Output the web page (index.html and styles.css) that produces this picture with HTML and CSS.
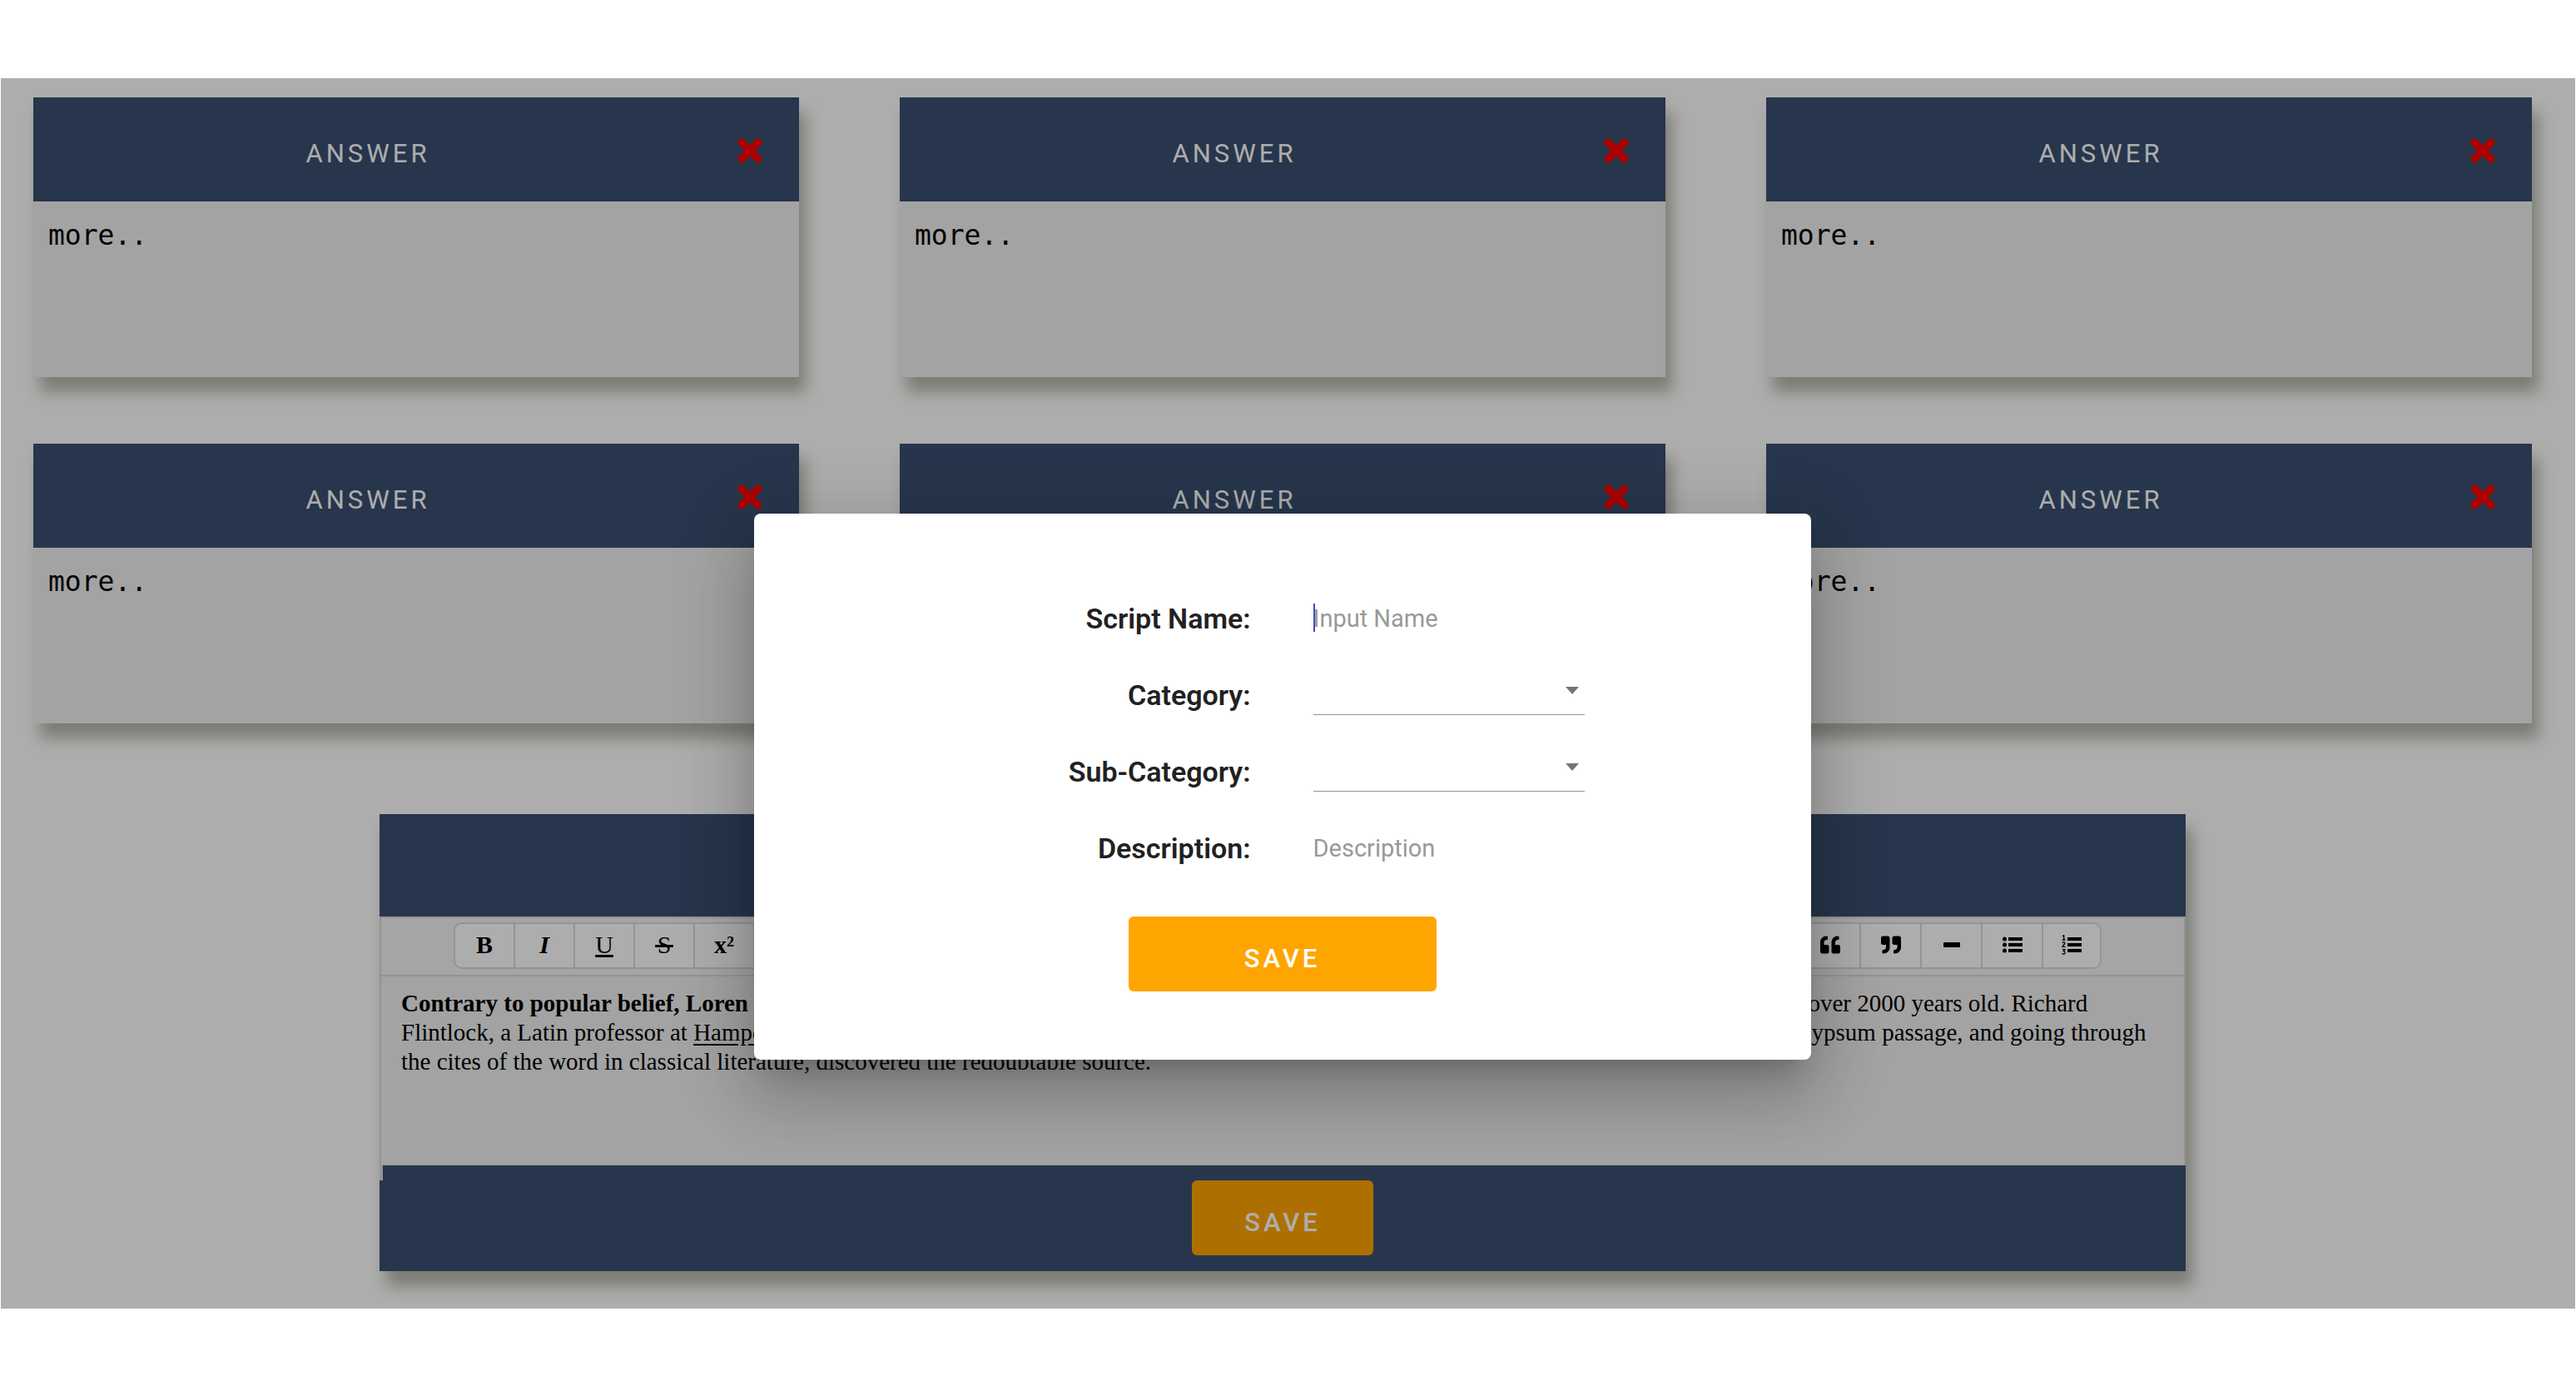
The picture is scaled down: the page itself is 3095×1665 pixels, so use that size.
FILE: index.html
```html
<!DOCTYPE html>
<html lang="en">
<head>
<meta charset="utf-8">
<title>Scripts</title>
<link rel="stylesheet" href="styles.css">
</head>
<body>
<svg class="sprite" aria-hidden="true">
  <symbol id="times" viewBox="0 0 30 30"><path d="M5 5 25 25M25 5 5 25" stroke="currentColor" stroke-width="9" stroke-linecap="round"/></symbol>
  <symbol id="quote-left" viewBox="0 0 512 512"><path fill="currentColor" d="M464 256h-80v-64c0-35.300 28.700-64 64-64h8c13.300 0 24-10.700 24-24V56c0-13.300-10.700-24-24-24h-8c-88.400 0-160 71.600-160 160v240c0 26.500 21.500 48 48 48h128c26.500 0 48-21.500 48-48V304c0-26.500-21.500-48-48-48zm-288 0H96v-64c0-35.300 28.700-64 64-64h8c13.300 0 24-10.700 24-24V56c0-13.300-10.700-24-24-24h-8C71.600 32 0 103.600 0 192v240c0 26.500 21.500 48 48 48h128c26.500 0 48-21.500 48-48V304c0-26.500-21.500-48-48-48z"/></symbol>
  <symbol id="quote-right" viewBox="0 0 512 512"><path fill="currentColor" d="M464 32H336c-26.500 0-48 21.500-48 48v128c0 26.500 21.500 48 48 48h80v64c0 35.300-28.700 64-64 64h-8c-13.300 0-24 10.700-24 24v48c0 13.300 10.700 24 24 24h8c88.400 0 160-71.600 160-160V80c0-26.500-21.500-48-48-48zm-288 0H48C21.500 32 0 53.500 0 80v128c0 26.500 21.500 48 48 48h80v64c0 35.300-28.700 64-64 64h-8c-13.300 0-24 10.700-24 24v48c0 13.300 10.700 24 24 24h8c88.400 0 160-71.600 160-160V80c0-26.500-21.500-48-48-48z"/></symbol>
  <symbol id="minus" viewBox="0 0 24 24"><rect x="2" y="9" width="20" height="6" rx="1" fill="currentColor"/></symbol>
  <symbol id="list-ul" viewBox="0 0 24 24"><g fill="currentColor"><circle cx="2.500" cy="5" r="2.500"/><circle cx="2.500" cy="12" r="2.500"/><circle cx="2.500" cy="19" r="2.500"/><path d="M7 3h17v4H7zM7 10h17v4H7zM7 17h17v4H7z"/></g></symbol>
  <symbol id="list-ol" viewBox="0 0 24 24"><path fill="currentColor" d="M7 3h17v4H7zM7 10h17v4H7zM7 17h17v4H7z"/><path fill="none" stroke="currentColor" stroke-width="1.300" d="M1 1.500 2.700.7V6M.8 6H4.500M.8 9.700C2 8.300 4 8.800 3.800 10.300 3.600 11.500 1 12.800 1 14.300H4.500M.8 17.600H4L2.400 19.700C4.500 19.700 4.600 23 2.400 23 1.600 23 1 22.800.6 22.300"/></symbol>
</svg>

<div class="stage">
  <main class="page">
    <section class="cards">
      <article class="card"><header class="card-head"><h2>ANSWER</h2><button class="close" aria-label="Remove"><svg><use href="#times"/></svg></button></header><pre class="card-body">more..</pre></article>
      <article class="card"><header class="card-head"><h2>ANSWER</h2><button class="close" aria-label="Remove"><svg><use href="#times"/></svg></button></header><pre class="card-body">more..</pre></article>
      <article class="card"><header class="card-head"><h2>ANSWER</h2><button class="close" aria-label="Remove"><svg><use href="#times"/></svg></button></header><pre class="card-body">more..</pre></article>
      <article class="card"><header class="card-head"><h2>ANSWER</h2><button class="close" aria-label="Remove"><svg><use href="#times"/></svg></button></header><pre class="card-body">more..</pre></article>
      <article class="card"><header class="card-head"><h2>ANSWER</h2><button class="close" aria-label="Remove"><svg><use href="#times"/></svg></button></header><pre class="card-body">more..</pre></article>
      <article class="card"><header class="card-head"><h2>ANSWER</h2><button class="close" aria-label="Remove"><svg><use href="#times"/></svg></button></header><pre class="card-body">more..</pre></article>
    </section>

    <section class="editor">
      <header class="editor-head"></header>
      <div class="toolbar">
        <div class="tools">
          <button class="tool" aria-label="Bold">B</button>
          <button class="tool" aria-label="Italic"><i>I</i></button>
          <button class="tool thin" aria-label="Underline"><u>U</u></button>
          <button class="tool thin" aria-label="Strikethrough"><s>&hairsp;S&hairsp;</s></button>
          <button class="tool" aria-label="Superscript">x²</button>
          <span class="tools-fill"></span>
          <button class="tool" aria-label="Open quote"><svg><use href="#quote-left"/></svg></button>
          <button class="tool" aria-label="Close quote"><svg><use href="#quote-right"/></svg></button>
          <button class="tool" aria-label="Rule"><svg><use href="#minus"/></svg></button>
          <button class="tool" aria-label="Bulleted list"><svg><use href="#list-ul"/></svg></button>
          <button class="tool" aria-label="Numbered list"><svg><use href="#list-ol"/></svg></button>
        </div>
      </div>
      <div class="editor-text">
        <p><b>Contrary to popular belief, Loren Ipsum is not simply random text.</b> It has roots in a piece of classical Latin literature, from 45 BC, making it over 2000 years old. Richard<br>
        Flintlock, a Latin professor at <u>Hampden-Sydney</u> College in Virginia, looked up one of the more obscure Latin words consectetur, from a Lorem Gypsum passage, and going through<br>
        the cites of the word in classical literature, discovered the redoubtable source.</p>
      </div>
      <footer class="editor-foot"><button class="save">SAVE</button></footer>
    </section>
  </main>

  <div class="backdrop">
    <form class="dialog" role="dialog" aria-label="Save script">
      <div class="row"><label for="name">Script Name:</label><span class="field focused"><input id="name" placeholder="Input Name"></span></div>
      <div class="row"><label for="category">Category:</label><span class="field select"><select id="category"><option></option></select></span></div>
      <div class="row"><label for="sub">Sub-Category:</label><span class="field select"><select id="sub"><option></option></select></span></div>
      <div class="row"><label for="desc">Description:</label><span class="field"><input id="desc" placeholder="Description"></span></div>
      <button type="button" class="save save-wide">SAVE</button>
    </form>
  </div>
</div>
</body>
</html>
```
FILE: styles.css
```css
* { box-sizing: border-box; }
body { margin: 0; padding: 94px 1px; background: #fff; font-family: Roboto, sans-serif; }
button, input, select { font: inherit; border: 0; background: none; padding: 0; margin: 0; }
.sprite { display: none; }
.stage { position: relative; }
.page { padding: 23px 52px 45px 39px; background: #fff; }

.cards { display: grid; grid-template-columns: repeat(3, 1fr); gap: 80px 121px; }
.card, .editor { box-shadow: 8px 18px 18px #b6b7aa; }
.card-head { display: flex; align-items: center; height: 125px; padding: 2px 44px 0 0; background: #3a5070; color: #fff; }
.card-head h2 { flex: 1; margin: 0; padding: 8px 42px 0 0; text-align: center; font-size: 31px; font-weight: 400; letter-spacing: 4px; line-height: 36px; }
.close { width: 30px; height: 30px; color: red; }
.close svg { display: block; width: 30px; height: 30px; }
.card-body { margin: 0; height: 211px; padding: 22px 18px; background: #f0f0f0; font: 33px/38px "DejaVu Sans Mono", monospace; color: #000; }

.editor { margin: 109px 416px 0; }
.editor-head { height: 123px; background: #3a5070; }
.toolbar { border: 2px solid #dbdbdb; background: #f3f3f3; height: 72px; padding: 5px 99px 0 87px; }
.tools { display: flex; height: 56px; border: 2px solid #dbdbdb; border-radius: 10px; background: #fff; }
.tool { width: 72px; padding-bottom: 2px; border-right: 2px solid #dbdbdb; display: flex; align-items: center; justify-content: center; font: bold 30px "Liberation Serif", serif; color: #000; }
.tool.thin { font-weight: 400; }
.tools-fill ~ .tool { width: 73px; }
.tools .tool:last-child { width: 68px; border-right: 0; }
.tool svg { width: 24px; height: 24px; }
.tools-fill { flex: 1; }
.editor-text { height: 227px; padding: 15px 24px; border: 2px solid #dbdbdb; border-top: 0; border-bottom-width: 1px; background: #f0f0f0; font: 29px/35px "Liberation Serif", serif; color: #000; }
.editor-text p { margin: 0; white-space: nowrap; }
.editor-text u { text-underline-offset: 4px; }
.editor-foot { position: relative; display: flex; justify-content: center; padding: 18px 0 19px; background: #3a5070; }
.editor-foot::before { content: ""; position: absolute; left: 0; top: 0; width: 4px; height: 18px; background: #dbdbdb; }

.save { width: 218px; height: 90px; padding: 10px 0 0; border-radius: 6px; background: orange; color: #fff; font-size: 31px; font-weight: 500; letter-spacing: 4px; }
.save-wide { width: 370px; margin-top: 36px; }

.backdrop { position: absolute; inset: 0; display: flex; justify-content: center; align-items: flex-start; padding: 523px 14px 0 0; background: rgba(0, 0, 0, .32); }
.dialog { display: flex; flex-direction: column; align-items: center; width: 1270px; padding: 80px 0 82px; border-radius: 8px; background: #fff; box-shadow: 0 22px 30px -14px rgba(0, 0, 0, .2), 0 48px 76px 6px rgba(0, 0, 0, .14), 0 18px 92px 16px rgba(0, 0, 0, .12); }
.row { display: flex; align-items: center; justify-content: flex-end; gap: 75px; width: 100%; height: 92px; padding-right: 272px; }
.row label { font-size: 34px; font-weight: 600; color: #212121; }
.field { position: relative; width: 326px; height: 54px; }
.field input, .field select { display: block; width: 100%; height: 54px; font-size: 29px; color: #212121; appearance: none; outline: 0; }
.field input::placeholder { color: #999; opacity: 1; }
.select { height: 48px; }
.field select { height: 48px; border-bottom: 1px solid #949494; border-radius: 0; }
.select::after { content: ""; position: absolute; right: 7px; top: 14px; border: 8px solid transparent; border-top: 9px solid #757575; border-bottom: 0; }
.focused::before { content: ""; position: absolute; left: 0; top: 9px; width: 2px; height: 34px; background: #3f51b5; }
```
